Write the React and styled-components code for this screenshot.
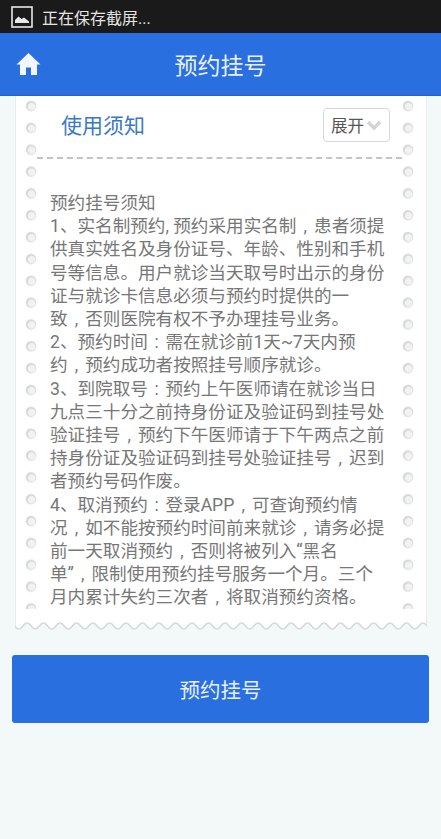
import React from "react";
import styled, { createGlobalStyle } from "styled-components";

const CJK = `"Roboto", "Noto Sans CJK SC", "Noto Sans", sans-serif`;
const PAGE_BG = "#f3f8f8";

const Global = createGlobalStyle`
  html, body { margin: 0; padding: 0; background: ${PAGE_BG}; }
  body { font-family: ${CJK}; }
`;

const Page = styled.div`
  width: 441px;
  height: 839px;
  display: flex;
  flex-direction: column;
  background: ${PAGE_BG};
  overflow: hidden;
`;

const StatusBar = styled.div`
  height: 33px;
  background: #1a1a1a;
  display: flex;
  align-items: center;
  gap: 9px;
  padding-left: 11px;
  color: #e4e4e4;
  font-size: 16px;
  flex: none;
`;

const Header = styled.header`
  height: 63px;
  flex: none;
  background: #2a6fe0;
  border-bottom: 1px solid #2563c8;
  box-sizing: border-box;
  display: flex;
  align-items: center;
  justify-content: center;
  position: relative;
  color: #e9f0fb;
  font-size: 23px;
`;

const HomeButton = styled.div`
  position: absolute;
  left: 16px;
  top: 18px;
  width: 25px;
  height: 25px;
`;

const Card = styled.section`
  margin: 0 14px 0 15px;
  height: 535px;
  flex: none;
  box-sizing: border-box;
  position: relative;
  background: #fff;
  border-left: 1px solid #e6ebeb;
  border-right: 1px solid #e6ebeb;
  display: flex;
  flex-direction: column;
`;

const Holes = styled.div`
  position: absolute;
  top: 0;
  left: ${(p) => (p.$right ? "376px" : "-1px")};
  width: 32px;
  height: 512.5px;
  background-image:
    radial-gradient(circle at 16.6px 10.6px, #f1f3f1 0 3.2px, transparent 4.4px),
    radial-gradient(circle at 16px 10px, #d3d7d3 0 4.4px, #e6e8e6 5px, transparent 5.8px);
  background-size: 32px 21.85px;
  background-repeat: repeat-y;
`;

const CardEdge = styled.svg`
  position: absolute;
  left: -1px;
  bottom: 0;
  width: 412px;
  height: 10px;
  display: block;
`;

const TitleRow = styled.div`
  height: 63px;
  flex: none;
  display: flex;
  align-items: center;
  justify-content: space-between;
  border-bottom: 2px dashed #c4c4c4;
  margin: 0 24px 0 21px;
  padding: 0 12px 0 24px;
  box-sizing: border-box;
  position: relative;
`;

const Title = styled.h2`
  margin: 0 0 6px;
  font-size: 21px;
  font-weight: 400;
  color: #3a78c6;
`;

const Toggle = styled.div`
  width: 67px;
  height: 34px;
  margin-bottom: 3px;
  box-sizing: border-box;
  border: 1px solid #d8d8d8;
  border-radius: 4px;
  background: #fff;
  display: flex;
  align-items: center;
  gap: 2px;
  padding-left: 7px;
  font-size: 16.5px;
  color: #555;
`;

const Notice = styled.div`
  position: relative;
  margin: 33px 0 0 34px;
  font-size: 17.6px;
  line-height: 23.2px;
  color: #777;
  white-space: nowrap;
`;

const Line = styled.div``;

const Punct = styled.span`
  display: inline-block;
  width: 1em;
  text-align: center;
`;

const Footer = styled.div`
  padding: 24px 12px 0;
  flex: none;
`;

const Submit = styled.button`
  width: 100%;
  height: 68px;
  border: 0;
  border-radius: 3px;
  background: #2a6fe0;
  color: #e9f0fb;
  font-family: ${CJK};
  font-size: 20.5px;
  padding: 0;
`;

const lines = [
  "预约挂号须知",
  "1、实名制预约, 预约采用实名制，患者须提",
  "供真实姓名及身份证号、年龄、性别和手机",
  "号等信息。用户就诊当天取号时出示的身份",
  "证与就诊卡信息必须与预约时提供的一",
  "致，否则医院有权不予办理挂号业务。",
  "2、预约时间：需在就诊前1天~7天内预",
  "约，预约成功者按照挂号顺序就诊。",
  "3、到院取号：预约上午医师请在就诊当日",
  "九点三十分之前持身份证及验证码到挂号处",
  "验证挂号，预约下午医师请于下午两点之前",
  "持身份证及验证码到挂号处验证挂号，迟到",
  "者预约号码作废。",
  "4、取消预约：登录APP，可查询预约情",
  "况，如不能按预约时间前来就诊，请务必提",
  "前一天取消预约，否则将被列入“黑名",
  "单”，限制使用预约挂号服务一个月。三个",
  "月内累计失约三次者，将取消预约资格。",
];

const renderLine = (text) =>
  text.split(/([，：])/).map((part, i) =>
    part === "，" ? <Punct key={i}>,</Punct> : part === "：" ? <Punct key={i}>:</Punct> : part
  );

const wave = `M-0.35 5 q4.125 6 8.25 0 ${Array.from({ length: 25 }).map(() => "t8.25 0 t8.25 0").join(" ")}`;

export default function App() {
  return (
    <Page>
      <Global />
      <StatusBar>
        <svg width="22" height="22" viewBox="0 0 22 22">
          <rect x="1" y="1" width="20" height="20" fill="#1a1a1a" stroke="#e8e8e8" strokeWidth="1.6" />
          <path d="M4 17 L4 14 L7.5 10.5 L10.5 13 L13 11.5 L18 15.5 L18 17 Z" fill="#e8e8e8" />
        </svg>
        正在保存截屏...
      </StatusBar>
      <Header>
        <HomeButton>
          <svg width="25" height="25" viewBox="0 0 25 25">
            <path d="M12.5 2 L24.5 13.5 L21 13.5 L21 24 L15 24 L15 16.5 L10 16.5 L10 24 L4 24 L4 13.5 L0.5 13.5 Z" fill="#f2f6fd" />
          </svg>
        </HomeButton>
        预约挂号
      </Header>
      <Card>
        <Holes />
        <Holes $right />
        <TitleRow>
          <Title>使用须知</Title>
          <Toggle>
            展开
            <svg width="16" height="12" viewBox="0 0 16 12">
              <path d="M2 3 L8 9 L14 3" fill="none" stroke="#d4d4d4" strokeWidth="3.4" />
            </svg>
          </Toggle>
        </TitleRow>
        <Notice>
          {lines.map((l) => (
            <Line key={l}>{renderLine(l)}</Line>
          ))}
        </Notice>
        <CardEdge viewBox="0 0 412 10">
          <path d={`${wave} L412 10 L0 10 Z`} fill={PAGE_BG} stroke="none" />
          <path d={wave} fill="none" stroke="#d6dada" strokeWidth="1.6" />
        </CardEdge>
      </Card>
      <Footer>
        <Submit>预约挂号</Submit>
      </Footer>
    </Page>
  );
}
